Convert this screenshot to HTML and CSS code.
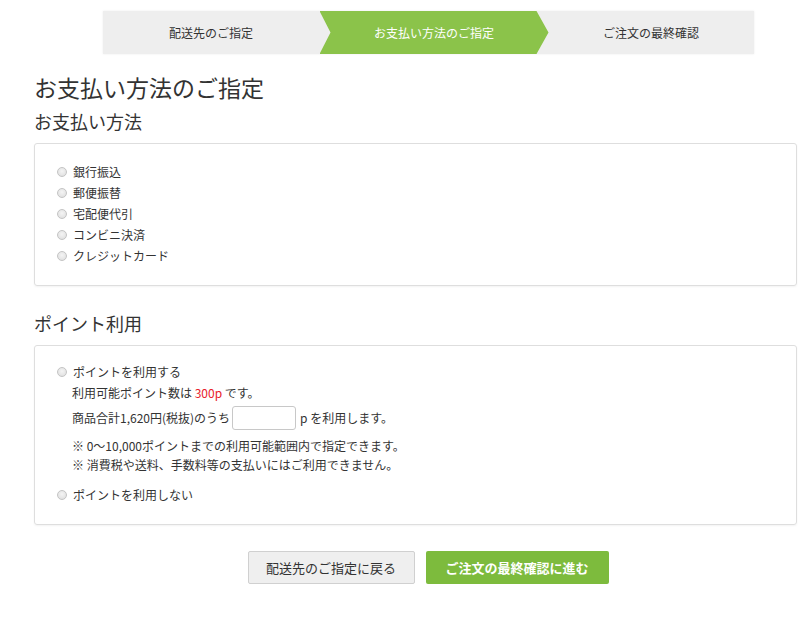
FILE: index.html
```html
<!DOCTYPE html>
<html lang="ja">
<head>
<meta charset="UTF-8">
<title>お支払い方法のご指定</title>
<link rel="stylesheet" href="styles.css">
</head>
<body>
<div class="page">
  <ol class="steps">
    <li class="step">配送先のご指定</li>
    <li class="step current">お支払い方法のご指定</li>
    <li class="step">ご注文の最終確認</li>
  </ol>

  <h1>お支払い方法のご指定</h1>

  <h2>お支払い方法</h2>
  <div class="box">
    <label class="opt"><input type="radio" name="pay"> 銀行振込</label>
    <label class="opt"><input type="radio" name="pay"> 郵便振替</label>
    <label class="opt"><input type="radio" name="pay"> 宅配便代引</label>
    <label class="opt"><input type="radio" name="pay"> コンビニ決済</label>
    <label class="opt"><input type="radio" name="pay"> クレジットカード</label>
  </div>

  <h2 class="second">ポイント利用</h2>
  <div class="box points">
    <label class="opt"><input type="radio" name="point"> ポイントを利用する</label>
    <div class="point-detail">
      <p class="avail">利用可能ポイント数は <span class="red">300p</span> です。</p>
      <p class="use">商品合計1,620円(税抜)のうち <input type="text" class="pt-input"> p を利用します。</p>
      <p class="note first">※ 0～10,000ポイントまでの利用可能範囲内で指定できます。</p>
      <p class="note">※ 消費税や送料、手数料等の支払いにはご利用できません。</p>
    </div>
    <label class="opt last"><input type="radio" name="point"> ポイントを利用しない</label>
  </div>

  <div class="actions">
    <button class="btn back">配送先のご指定に戻る</button>
    <button class="btn next">ご注文の最終確認に進む</button>
  </div>
</div>
</body>
</html>
```

FILE: styles.css
```css
html, body {
  margin: 0;
  padding: 0;
  overflow-x: hidden;
}
body {
  font-family: "Noto Sans CJK JP", "Noto Sans", sans-serif;
  color: #333;
  font-size: 12px;
  background: #fff;
}
.page {
  width: 788px;
  padding: 11px 0 30px 34px;
}
/* ステップ */
.steps {
  list-style: none;
  display: flex;
  width: 651px;
  height: 43px;
  margin: 0 auto;
  padding: 0;
  background: #eeeeee;
  box-shadow: 0 0 2px rgba(0,0,0,0.08);
}
.step {
  display: flex;
  align-items: center;
  justify-content: center;
  font-size: 12px;
  color: #333;
}
.step:first-child {
  width: 217px;
}
.step.current {
  width: 229px;
  background: #8bc34a;
  color: #fff;
  clip-path: polygon(0 0, calc(100% - 12px) 0, 100% 50%, calc(100% - 12px) 100%, 0 100%, 11px 50%);
}
.step:last-child {
  flex: 1;
}
h1 {
  font-size: 23px;
  font-weight: normal;
  margin: 17px 0 0;
  line-height: 32px;
}
h2 {
  font-size: 18px;
  font-weight: normal;
  margin: 5px 0 9px;
  line-height: 26px;
}
h2.second {
  margin-top: 24px;
  margin-bottom: 9px;
}
.box {
  width: 763px;
  border: 1px solid #dedede;
  border-radius: 3px;
  box-shadow: 0 1px 2px rgba(0,0,0,0.05);
  padding: 17px 0 19px 22px;
  box-sizing: border-box;
}
.opt {
  display: flex;
  align-items: center;
  height: 21px;
  line-height: 21px;
}
.opt input {
  -webkit-appearance: none;
  appearance: none;
  width: 10px;
  height: 10px;
  margin: 0 6px 0 0;
  border: 1px solid #c4c4c4;
  border-radius: 50%;
  background: radial-gradient(circle at 50% 40%, #f4f4f4, #dcdcdc);
  box-sizing: border-box;
}
.points {
  padding-top: 15px;
  padding-bottom: 19px;
}
.point-detail {
  padding-left: 15px;
}
.point-detail p {
  margin: 0;
  line-height: 21px;
}
.red {
  color: #e8202a;
}
.use {
  display: flex;
  align-items: center;
  height: 27px;
  margin-top: 1px !important;
}
.pt-input {
  width: 64px;
  height: 24px;
  margin: 0 4px 0 2px;
  border: 1px solid #c8c8c8;
  border-radius: 3px;
  box-sizing: border-box;
}
.note {
  line-height: 19px !important;
}
.note.first {
  margin-top: 5px !important;
}
.opt.last {
  margin-top: 10px;
}
.actions {
  display: flex;
  justify-content: center;
  gap: 11px;
  margin-top: 26px;
}
.btn {
  font-family: inherit;
  font-size: 13px;
  height: 33px;
  border-radius: 2px;
  cursor: pointer;
}
.btn.back {
  width: 167px;
  background: #efefef;
  border: 1px solid #d0d0d0;
  color: #333;
}
.btn.next {
  width: 183px;
  background: #7dbb3d;
  border: none;
  color: #fff;
  font-weight: bold;
}
```
